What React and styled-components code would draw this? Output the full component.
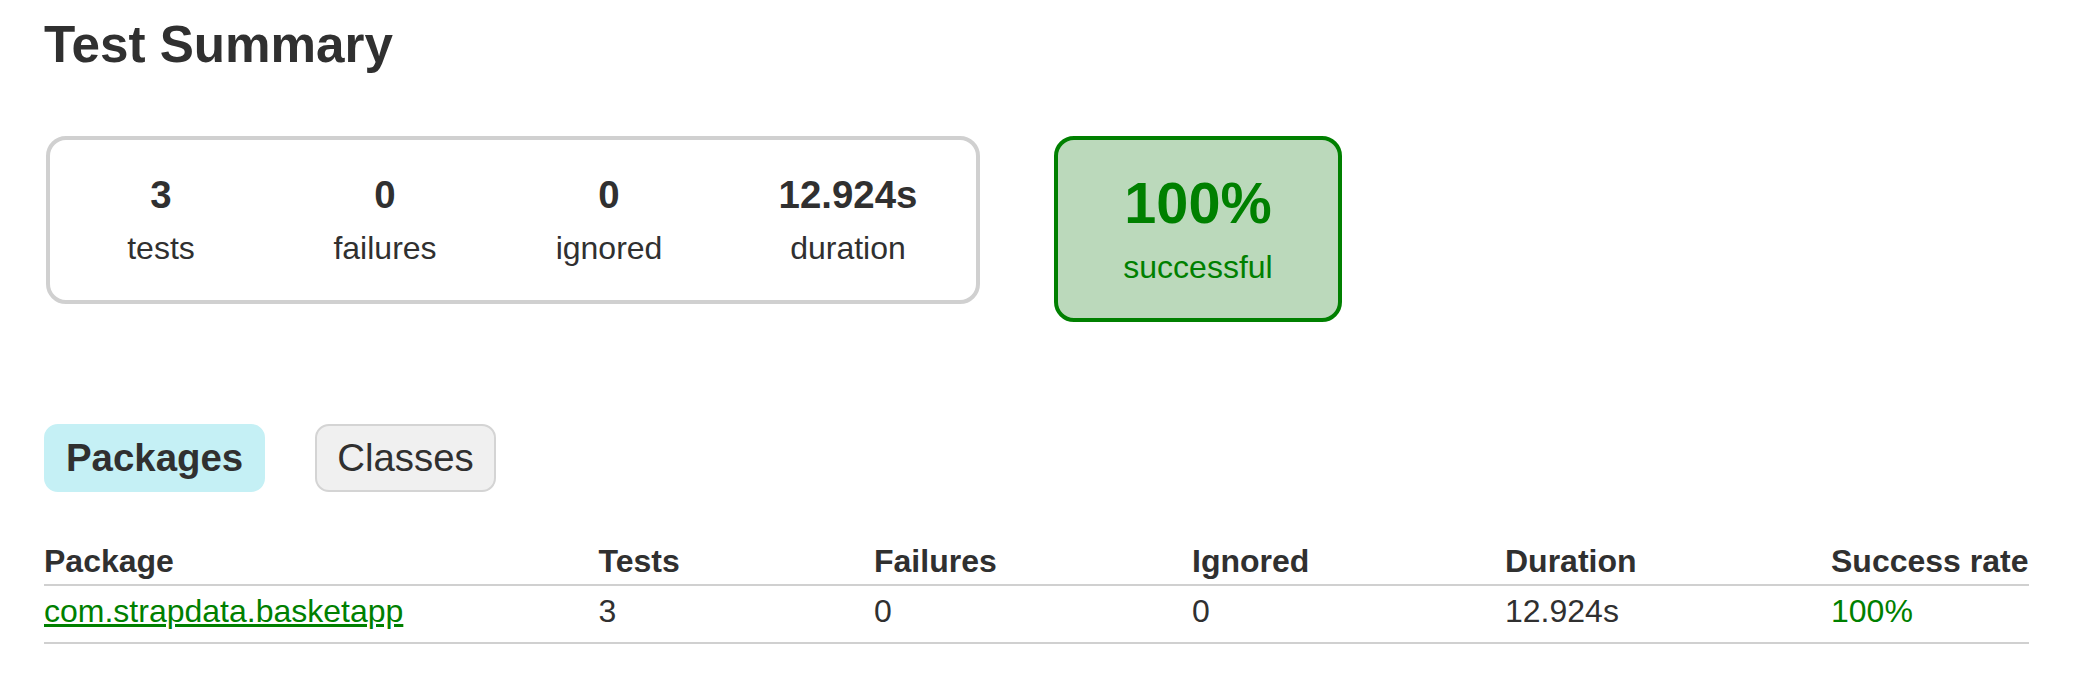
import React from "react";
import styled, { createGlobalStyle } from "styled-components";

const GlobalStyle = createGlobalStyle`
  html, body {
    margin: 0;
    padding: 0;
    background: #ffffff;
  }
  body {
    font-family: "Liberation Sans", Arial, Helvetica, sans-serif;
    font-size: 32px;
    color: #303030;
  }
`;

const Content = styled.div`
  padding: 15px 71px 30px 44px;
`;

const Title = styled.h1`
  margin: 0;
  font-size: 51.2px;
  line-height: 59px;
  font-weight: bold;
  color: #303030;
`;

const SummaryRow = styled.div`
  display: flex;
  align-items: flex-start;
  gap: 74px;
  margin: 62px 0 0 2px;
`;

const SummaryGroup = styled.div`
  display: grid;
  grid-template-columns: 220px 220px 220px 250px;
  column-gap: 4px;
  padding: 0 3px 0 1px;
  border: 4px solid #d0d0d0;
  border-radius: 20px;
`;

const InfoBox = styled.div`
  text-align: center;
  padding: 33px 0 33px;
`;

const Counter = styled.div`
  font-size: 38.4px;
  line-height: 44px;
  font-weight: bold;
  margin-bottom: 13px;
`;

const Label = styled.p`
  margin: 0;
  font-size: 32px;
  line-height: 37px;
`;

const SuccessRate = styled.div`
  width: 280px;
  text-align: center;
  padding: 30px 0 32px;
  border: 4px solid #008000;
  border-radius: 20px;
  background: #bbd9bb;
  color: #008000;
`;

const Percent = styled.div`
  font-size: 57.6px;
  line-height: 66px;
  font-weight: bold;
  margin-bottom: 13px;
`;

const TabLinks = styled.ul`
  display: flex;
  gap: 50px;
  margin: 102px 0 0;
  padding: 0;
  list-style: none;
`;

const Tab = styled.li`
  padding: 10px 20px;
  border-radius: 14px;
  border: 2px solid ${(p) => (p.$selected ? "#c5f0f5" : "#d4d4d4")};
  background: ${(p) => (p.$selected ? "#c5f0f5" : "#f0f0f0")};
  font-size: 38.4px;
  line-height: 44px;
  font-weight: ${(p) => (p.$selected ? "bold" : "normal")};
  color: #303030;
`;

const Table = styled.table`
  margin-top: 51px;
  width: 1985px;
  border-collapse: collapse;
  table-layout: fixed;
`;

const Th = styled.th`
  text-align: left;
  vertical-align: bottom;
  font-weight: bold;
  font-size: 32px;
  line-height: 37px;
  padding: 0 0 4px 0;
  border-bottom: 2px solid #d0d0d0;
  width: ${(p) => p.$w}px;
  white-space: nowrap;
`;

const Td = styled.td`
  text-align: left;
  font-size: 32px;
  line-height: 37px;
  padding: 7px 0 12px 0;
  border-bottom: 2px solid #d0d0d0;
  color: ${(p) => (p.$success ? "#008000" : "#303030")};
  white-space: nowrap;
`;

const PackageLink = styled.a`
  color: #008000;
  text-decoration: underline;
`;

const counters = [
  { value: "3", label: "tests" },
  { value: "0", label: "failures" },
  { value: "0", label: "ignored" },
  { value: "12.924s", label: "duration" },
];

const columns = [
  { name: "Package", w: 554.5 },
  { name: "Tests", w: 275.5 },
  { name: "Failures", w: 318 },
  { name: "Ignored", w: 313 },
  { name: "Duration", w: 326 },
  { name: "Success rate", w: 198 },
];

export default function App() {
  return (
    <>
      <GlobalStyle />
      <Content>
        <Title>Test Summary</Title>
        <SummaryRow>
          <SummaryGroup>
            {counters.map((c) => (
              <InfoBox key={c.label}>
                <Counter>{c.value}</Counter>
                <Label>{c.label}</Label>
              </InfoBox>
            ))}
          </SummaryGroup>
          <SuccessRate>
            <Percent>100%</Percent>
            <Label>successful</Label>
          </SuccessRate>
        </SummaryRow>
        <TabLinks>
          <Tab $selected>Packages</Tab>
          <Tab>Classes</Tab>
        </TabLinks>
        <Table>
          <thead>
            <tr>
              {columns.map((c) => (
                <Th key={c.name} $w={c.w}>
                  {c.name}
                </Th>
              ))}
            </tr>
          </thead>
          <tbody>
            <tr>
              <Td>
                <PackageLink href="#">com.strapdata.basketapp</PackageLink>
              </Td>
              <Td>3</Td>
              <Td>0</Td>
              <Td>0</Td>
              <Td>12.924s</Td>
              <Td $success>100%</Td>
            </tr>
          </tbody>
        </Table>
      </Content>
    </>
  );
}
